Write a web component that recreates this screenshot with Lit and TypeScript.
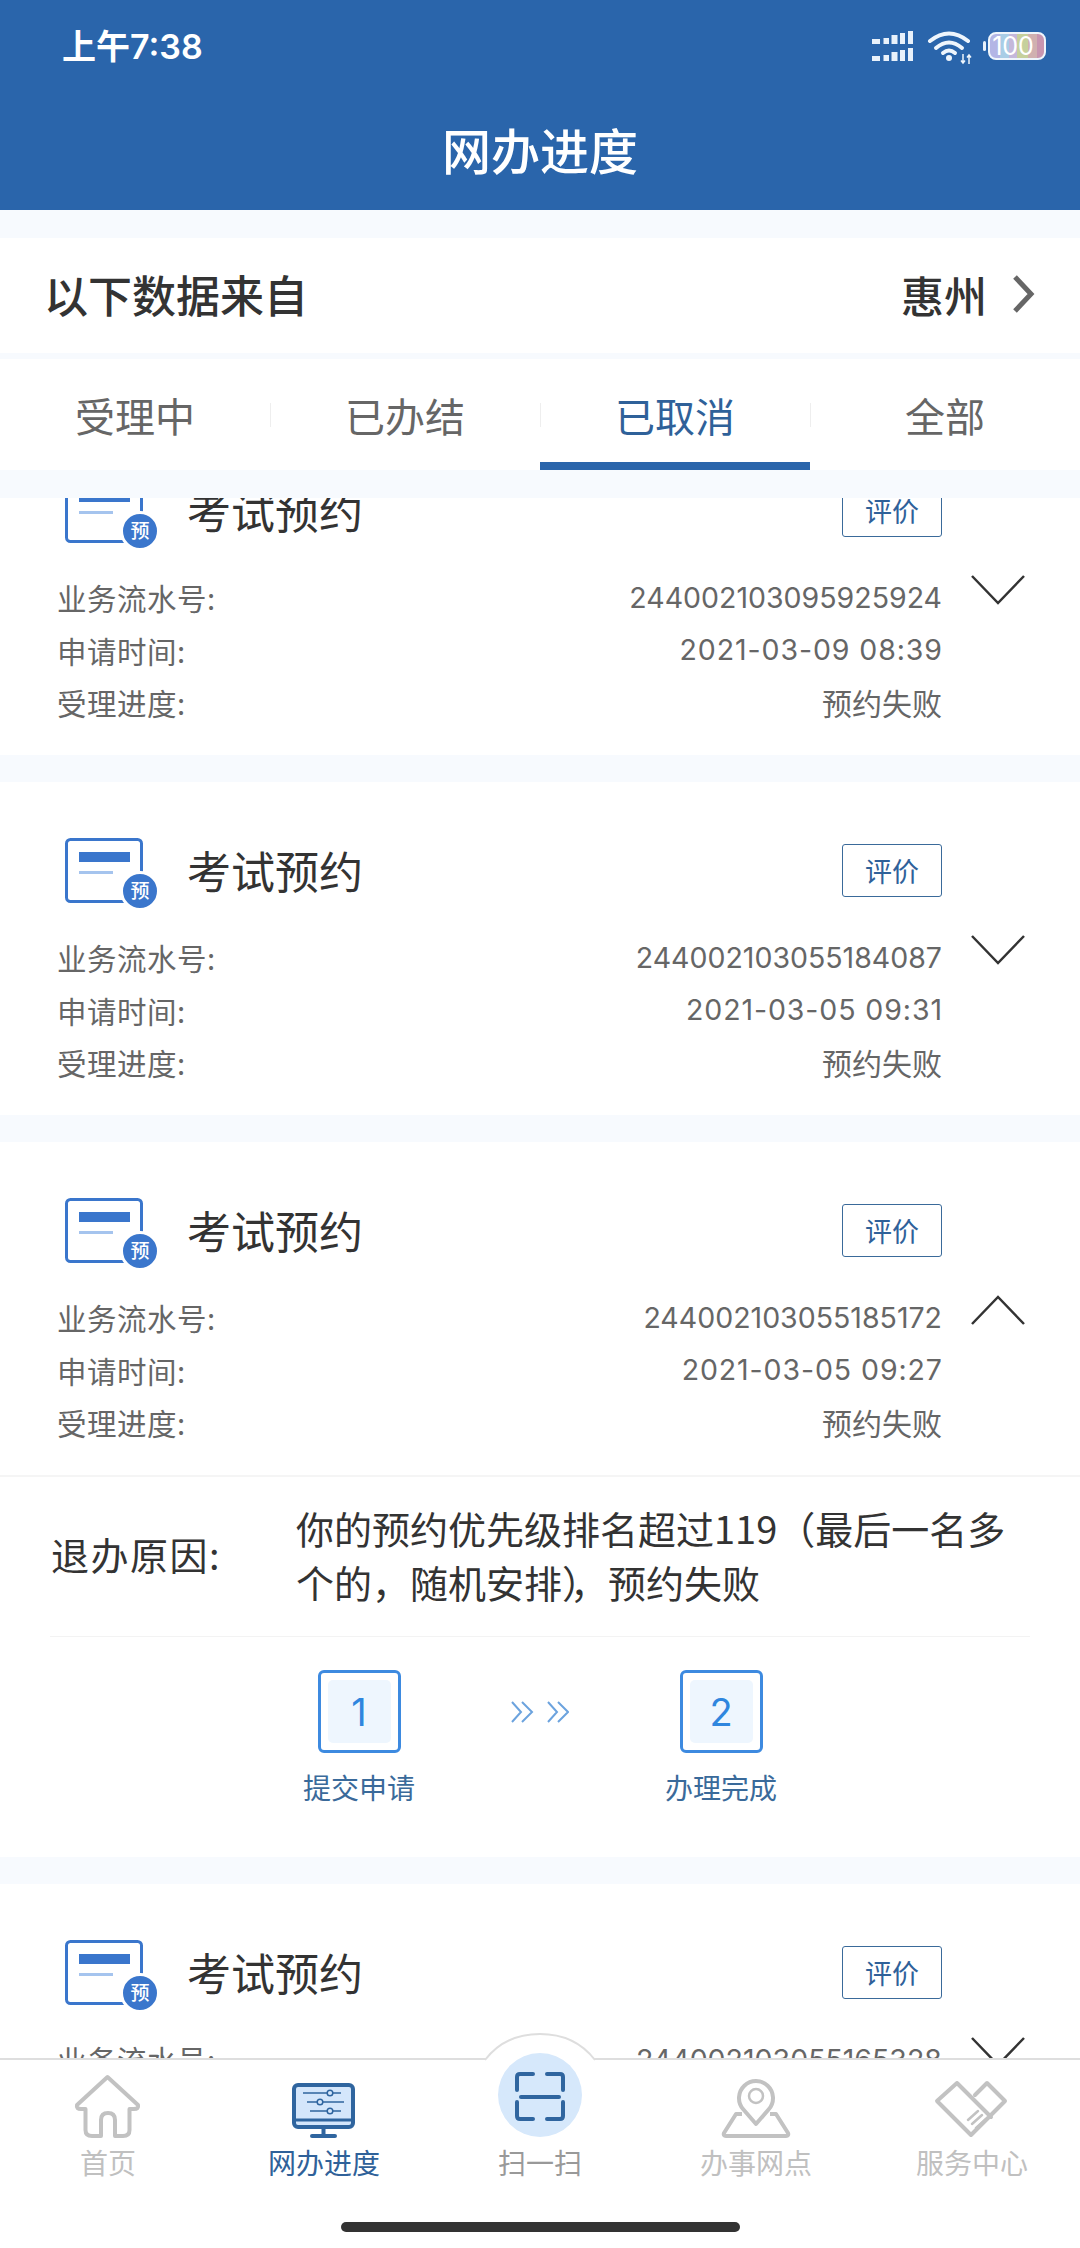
import { LitElement, html, css, svg } from "lit";
import { customElement } from "lit/decorators.js";

const cards = [
  { no: "244002103095925924", time: "2021-03-09 08:39", open: false },
  { no: "244002103055184087", time: "2021-03-05 09:31", open: false },
  { no: "244002103055185172", time: "2021-03-05 09:27", open: true },
  { no: "244002103055165328", time: "2021-03-05 09:20", open: false },
];

const nav = [
  { label: "首页", cls: "", icon: svg`<path d="M39.5 13 L9 41 Q8 45 13 45 H17.5 V66 Q17.5 72 24 72 H33 V56 Q33 49 40 49 Q47 49 47 56 V72 H55 Q61.5 72 61.5 66 V45 H66 Q71 45 70 41 Z" fill="none" stroke="#c2c2c2" stroke-width="4" stroke-linejoin="round"/>` },
  { label: "网办进度", cls: "on", icon: svg`<rect x="10" y="21" width="59" height="42" rx="4" fill="#d4e6fb" stroke="#2f659f" stroke-width="4"/><path d="M10 56 H69" stroke="#2f659f" stroke-width="3"/><path d="M39.500 64 V72 M28 72 H51" stroke="#2f659f" stroke-width="4" stroke-linecap="round"/><g stroke="#2f659f" stroke-width="1.500" fill="#d4e6fb"><path d="M19 29 H57 M23 38 H60 M26 47 H57"/><circle cx="46" cy="29" r="2.800"/><circle cx="36" cy="38" r="2.800"/><circle cx="46" cy="47" r="2.800"/></g>` },
  { label: "扫一扫", cls: "scan", icon: svg`<circle cx="40" cy="31" r="42" fill="#d6e8fb"/><g fill="none" stroke="#2f659f" stroke-width="4" stroke-linecap="round"><path d="M33 10 H20 Q17 10 17 13 V26"/><path d="M47 10 H60 Q63 10 63 13 V26"/><path d="M17 38 V52 Q17 55 20 55 H33"/><path d="M63 38 V52 Q63 55 60 55 H47"/><path d="M21 33 H59"/></g>` },
  { label: "办事网点", cls: "", icon: svg`<g fill="none" stroke="#c2c2c2" stroke-linejoin="round"><path d="M26 50 H20 L8 69 Q7 72 10 72 H70 Q73 72 72 69 L60 50 H54" stroke-width="4"/><path d="M40 60 L27 45 A17 17 0 1 1 53 45 Z" stroke-width="4"/><circle cx="40" cy="32" r="7" stroke-width="2.500"/></g>` },
  { label: "服务中心", cls: "", icon: svg`<g fill="none" stroke="#c2c2c2" stroke-linejoin="round" stroke-linecap="round"><path d="M25 19 L5 37 L39 71 L73 37 L55 19 L43 31 M25 19 L59 53" stroke-width="4"/><path d="M36 56 L46 47 M40 60 L50 51 M44 64 L54 55" stroke-width="2.500"/></g>` },
];

@customElement("app-root")
export class AppRoot extends LitElement {
  static styles = css`
    :host {
      display: block;
      font-family: "Noto Sans CJK SC", "Noto Sans", sans-serif;
    }
    .page {
      width: 1080px;
      height: 2248px;
      display: flex;
      flex-direction: column;
      background: #f7fafe;
      overflow: hidden;
    }
    .header {
      height: 210px;
      flex: none;
      background: #2a65ab;
      color: #fff;
    }
    .status {
      height: 90px;
      display: flex;
      align-items: center;
      justify-content: space-between;
      padding: 4px 32px 0 62px;
      box-sizing: border-box;
    }
    .time {
      font-family: Inter, "Noto Sans CJK SC", sans-serif;
      font-size: 34px;
      font-weight: 600;
      line-height: 40px;
    }
    .status svg {
      display: block;
    }
    .title {
      height: 120px;
      display: flex;
      align-items: center;
      justify-content: center;
      box-sizing: border-box;
      padding-bottom: 4px;
      font-size: 49px;
      font-weight: 500;
    }
    .source {
      flex: none;
      margin-top: 28px;
      height: 115px;
      box-sizing: border-box;
      background: #fff;
      display: flex;
      align-items: center;
      justify-content: space-between;
      padding: 0 44px 3px 44px;
      font-size: 44px;
      font-weight: 500;
      color: #333;
    }
    .city {
      display: flex;
      align-items: center;
      gap: 24px;
      font-size: 43px;
      margin-right: 1px;
    }
    .tabs {
      flex: none;
      margin-top: 6px;
      height: 111px;
      background: #fff;
      display: grid;
      grid-template-columns: repeat(4, 270px);
    }
    .tab {
      position: relative;
      display: flex;
      align-items: center;
      justify-content: center;
      font-size: 40px;
      color: #666;
      box-sizing: border-box;
      border-bottom: 8px solid transparent;
      padding-top: 9px;
    }
    .tab + .tab::before {
      content: "";
      position: absolute;
      left: 0;
      top: 44px;
      height: 24px;
      width: 1px;
      background: #eeeeee;
    }
    .tab.active {
      color: #2f6199;
      border-bottom-color: #2a65ab;
    }
    .list {
      flex: 1;
      min-height: 0;
      margin-top: 28px;
      overflow: hidden;
      display: flex;
      flex-direction: column;
      gap: 27px;
    }
    .card {
      flex: none;
      background: #fff;
    }
    .card:first-child {
      margin-top: -76px;
    }
    .summary {
      height: 333px;
      box-sizing: border-box;
      padding-top: 56px;
    }
    .head {
      display: flex;
      align-items: center;
      height: 70px;
      padding: 0 138px 0 65px;
    }
    .head svg {
      display: block;
      flex: none;
    }
    .name {
      margin-left: 30px;
      font-size: 44px;
      color: #333;
      line-height: 56px;
      padding-bottom: 7px;
    }
    .btn {
      margin-left: auto;
      align-self: flex-start;
      margin-top: 6px;
      width: 100px;
      height: 53px;
      box-sizing: border-box;
      border: 1.500px solid #3a6a9a;
      border-radius: 3px;
      display: flex;
      align-items: center;
      justify-content: center;
      font-size: 27px;
      color: #2f6199;
    }
    .body {
      display: flex;
      padding-left: 57px;
      margin-top: 23px;
    }
    .rows {
      width: 885px;
      flex: none;
    }
    .row {
      height: 52.500px;
      display: flex;
      align-items: center;
      justify-content: space-between;
      font-size: 29.500px;
      color: #666;
    }
    .label {
      letter-spacing: 0.500px;
    }
    .no {
      font-family: Inter, "Noto Sans CJK SC", sans-serif;
      font-size: 28.500px;
    }
    .date {
      font-family: Inter, "Noto Sans CJK SC", sans-serif;
      font-size: 28.500px;
      letter-spacing: 0.900px;
      margin-right: -0.900px;
    }
    .state {
      font-size: 30px;
    }
    .chev {
      flex: none;
      display: block;
      margin: 4px 0 0 29px;
    }
    .reason {
      margin: 0 50px;
      padding: 24px 0 27px;
      display: flex;
      align-items: center;
      font-size: 38px;
      color: #333;
      line-height: 54px;
      border-bottom: 1px solid #f3f3f3;
    }
    .divider {
      height: 2px;
      background: #f5f5f5;
    }
    .reason .k {
      flex: none;
      width: 246px;
      padding-left: 1px;
      box-sizing: border-box;
      padding-bottom: 3px;
      letter-spacing: 1.500px;
    }
    .reason .v {
      width: 728px;
    }
    .tight {
      letter-spacing: -11px;
    }
    .steps {
      display: flex;
      justify-content: center;
      padding: 33px 0 52px;
    }
    .step {
      width: 110px;
      display: flex;
      flex-direction: column;
      align-items: center;
      font-size: 28px;
      color: #3a6a9a;
    }
    .box {
      width: 83px;
      height: 83px;
      box-sizing: border-box;
      border: 3px solid #3d8ae0;
      border-radius: 6px;
      padding: 7px;
    }
    .box span {
      display: flex;
      height: 100%;
      align-items: center;
      justify-content: center;
      background: #eef6fe;
      border-radius: 5px;
      font-family: Inter, sans-serif;
      font-size: 38px;
      color: #2f86de;
    }
    .step label {
      margin-top: 16px;
      line-height: 36px;
      white-space: nowrap;
    }
    .arrows {
      display: block;
      margin: 31px 97px 0;
      flex: none;
    }
    .nav {
      flex: none;
      position: relative;
      height: 190px;
      box-sizing: border-box;
      background: #fff;
      border-top: 2px solid #dedede;
    }
    .bump {
      position: absolute;
      left: 480px;
      top: -28px;
      display: block;
    }
    .items {
      position: relative;
      display: grid;
      grid-template-columns: repeat(5, 216px);
      padding-top: 4px;
    }
    .item {
      display: flex;
      flex-direction: column;
      align-items: center;
      font-size: 28px;
      line-height: 36px;
      color: #c0c0c0;
    }
    .item.on {
      color: #2f6199;
    }
    .item.scan {
      color: #999;
    }
    .item svg {
      display: block;
      overflow: visible;
    }
    .indicator {
      margin: 42px auto 0;
      width: 399px;
      height: 10px;
      border-radius: 5px;
      background: #333;
    }
  `;

  private statusIcons() {
    return html`<svg width="178" height="36" viewBox="0 0 178 36">
      <g fill="#e8f1fb">
        <rect x="2" y="10" width="8" height="5"/><rect x="13.500" y="9" width="5.500" height="6"/><rect x="21.500" y="6" width="6" height="9"/><rect x="30" y="4" width="5" height="11"/><rect x="38" y="2" width="5" height="13"/>
        <rect x="2" y="27" width="8" height="5"/><rect x="13.500" y="26" width="5.500" height="6"/><rect x="21.500" y="23" width="6" height="9"/><rect x="30" y="21" width="5" height="11"/><rect x="38" y="19" width="5" height="13"/>
      </g>
      <g fill="none" stroke="#eef5fc" stroke-width="4" stroke-linecap="round">
        <path d="M60 12 Q79 -3 98 12"/><path d="M66 19 Q79 8 92 19"/><path d="M73 24 Q79 19 85 24"/>
      </g>
      <circle cx="79" cy="29" r="3" fill="#eef5fc"/>
      <path d="M93 25 V34 M91 31.500 L93 34 L95 31.500 M99 35 V26 M97 28.500 L99 26 L101 28.500" stroke="#eef5fc" stroke-width="1.500" fill="none"/>
      <rect x="113" y="12" width="3" height="10" rx="1.500" fill="#e8f1fb"/>
      <defs>
        <linearGradient id="rb" x1="0" x2="1" y1="0" y2="0">
          <stop offset="0" stop-color="#b3b5e5"/><stop offset=".2" stop-color="#b3b5e5"/>
          <stop offset=".2" stop-color="#a9cde6"/><stop offset=".35" stop-color="#a9cde6"/>
          <stop offset=".35" stop-color="#c4b8da"/><stop offset=".5" stop-color="#c4b8da"/>
          <stop offset=".5" stop-color="#c6d09c"/><stop offset=".7" stop-color="#c6d09c"/>
          <stop offset=".7" stop-color="#d0b0b0"/><stop offset=".85" stop-color="#d0b0b0"/>
          <stop offset=".85" stop-color="#c795b0"/><stop offset="1" stop-color="#c795b0"/>
        </linearGradient>
      </defs>
      <rect x="119" y="4" width="56" height="26" rx="7" fill="url(#rb)" stroke="#eef5fc" stroke-width="2"/>
      <text x="143" y="26" text-anchor="middle" font-family="Inter, sans-serif" font-size="25" fill="#fff">100</text>
    </svg>`;
  }

  private cardIcon() {
    return html`<svg width="92" height="70" viewBox="0 0 92 70">
      <rect x="1.500" y="1.500" width="75" height="62" rx="4" fill="#fff" stroke="#3a76cc" stroke-width="3"/>
      <rect x="14" y="14" width="51" height="10" fill="#3a76cc"/>
      <rect x="14" y="33" width="34" height="3" fill="#a5c4ee"/>
      <circle cx="75" cy="53" r="18.500" fill="#3a76cc" stroke="#fff" stroke-width="3"/>
      <text x="75" y="60" text-anchor="middle" font-size="19" font-weight="500" fill="#fff">预</text>
    </svg>`;
  }

  private chevron(open: boolean) {
    return html`<svg class="chev" width="54" height="30" viewBox="0 0 54 30">
      <path d=${open ? "M1 29 L27 2 L53 29" : "M1 1 L27 28 L53 1"} fill="none" stroke="#333" stroke-width="2.500"/>
    </svg>`;
  }

  private card(c: (typeof cards)[number]) {
    return html`<div class="card">
      <div class="summary">
        <div class="head">
          ${this.cardIcon()}
          <div class="name">考试预约</div>
          <div class="btn">评价</div>
        </div>
        <div class="body">
          <div class="rows">
            <div class="row"><span class="label">业务流水号:</span><span class="no">${c.no}</span></div>
            <div class="row"><span class="label">申请时间:</span><span class="date">${c.time}</span></div>
            <div class="row"><span class="label">受理进度:</span><span class="state">预约失败</span></div>
          </div>
          ${this.chevron(c.open)}
        </div>
      </div>
      ${c.open
        ? html`<div class="divider"></div>
            <div class="reason">
              <div class="k">退办原因:</div>
              <div class="v">你的预约优先级排名超过119（最后一名多个的，随机安排<span class="tight">）</span>，预约失败</div>
            </div>
            <div class="steps">
              <div class="step"><div class="box"><span>1</span></div><label>提交申请</label></div>
              <svg class="arrows" width="58" height="22" viewBox="0 0 58 22">
                <g fill="none" stroke="#6ca3de" stroke-width="2">
                  <path d="M1 1 L10 11 L1 21 M11 1 L21 11 L11 21"/>
                  <path d="M37 1 L46 11 L37 21 M47 1 L57 11 L47 21"/>
                </g>
              </svg>
              <div class="step"><div class="box"><span>2</span></div><label>办理完成</label></div>
            </div>`
        : ""}
    </div>`;
  }

  render() {
    return html`<div class="page">
      <div class="header">
        <div class="status">
          <div class="time">上午7:38</div>
          ${this.statusIcons()}
        </div>
        <div class="title">网办进度</div>
      </div>
      <div class="source">
        <div>以下数据来自</div>
        <div class="city">
          <span>惠州</span>
          <svg width="24" height="38" viewBox="0 0 24 38"><path d="M4 2 L20 19 L4 36" fill="none" stroke="#666" stroke-width="5"/></svg>
        </div>
      </div>
      <div class="tabs">
        <div class="tab">受理中</div>
        <div class="tab">已办结</div>
        <div class="tab active">已取消</div>
        <div class="tab">全部</div>
      </div>
      <div class="list">${cards.map((c) => this.card(c))}</div>
      <div class="nav">
        <svg class="bump" width="120" height="30" viewBox="0 0 120 30">
          <path d="M5 28 Q25 2 60 2 Q95 2 115 28 L115 30 L5 30 Z" fill="#fff"/>
          <path d="M5 28 Q25 2 60 2 Q95 2 115 28" fill="none" stroke="#dedede" stroke-width="2"/>
        </svg>
        <div class="items">
          ${nav.map(
            (n) => html`<div class="item ${n.cls}">
              <svg width="80" height="80" viewBox="0 0 80 80">${n.icon}</svg>
              <span>${n.label}</span>
            </div>`
          )}
        </div>
        <div class="indicator"></div>
      </div>
    </div>`;
  }
}
